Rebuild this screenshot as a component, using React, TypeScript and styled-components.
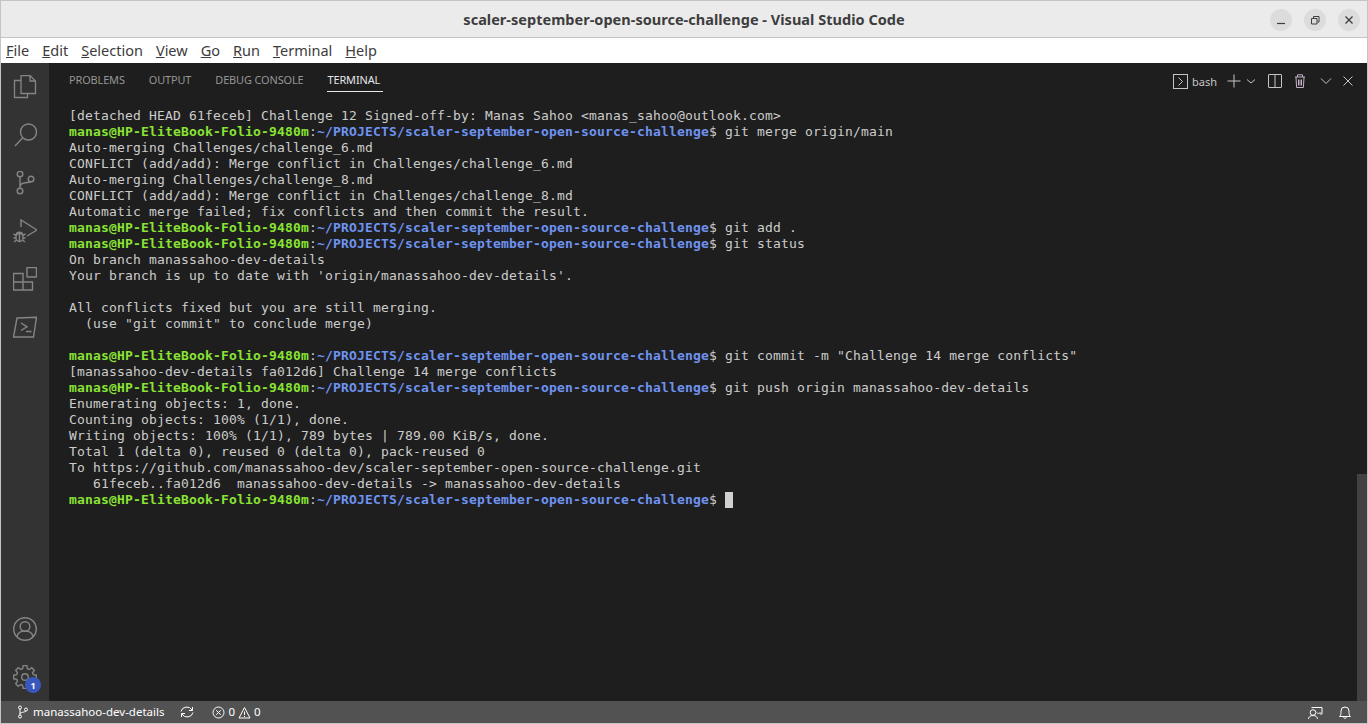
import React from "react";
import styled, { createGlobalStyle } from "styled-components";

const Global = createGlobalStyle`
  html, body { margin: 0; padding: 0; width: 1368px; height: 724px; overflow: hidden; background: #c8c8c8; }
  * { box-sizing: border-box; }
`;
const UI = `"Noto Sans", "Open Sans", sans-serif`;

const Win = styled.div`
  width: 1368px; height: 724px; display: flex; flex-direction: column;
  border: 1px solid #c4c4c4; background: #1e1e1e;
  font-family: ${UI};
`;
const TitleBar = styled.header`
  height: 37px; flex: none; background: #ebebeb; display: flex; align-items: center; justify-content: flex-end;
  position: relative; padding-right: 7px; gap: 12px; border-bottom: 1px solid #c4c4c4;
`;
const Title = styled.h1`
  position: absolute; left: 0; right: 0; top: 0; margin: 0; text-align: center; line-height: 36px;
  font-size: 14.5px; font-weight: 700; color: #3d3d3d; letter-spacing: 0.02px;
`;
const WinBtn = styled.button`
  width: 22px; height: 22px; border-radius: 50%; border: 0; background: #dcdcdc; padding: 0;
  display: flex; align-items: center; justify-content: center; color: #3d3d3d; margin-top: 2px;
`;
const MenuBar = styled.nav`
  height: 25px; flex: none; background: #fff; display: flex; align-items: center; padding-left: 5px; gap: 13px;
  font-size: 14.5px; color: #3c3c3c;
`;
const MenuItem = styled.span`
  line-height: 25px;
  &::first-letter { text-decoration: underline; }
`;
const Main = styled.div`flex: 1; min-height: 0; display: flex;`;
const Activity = styled.aside`
  width: 48px; flex: none; background: #333; display: flex; flex-direction: column; justify-content: space-between;
`;
const ActGroup = styled.div`display: flex; flex-direction: column;`;
const ActItem = styled.div`
  width: 48px; height: 48px; display: flex; align-items: center; justify-content: center; color: #858585; position: relative;
`;
const Badge = styled.span`
  position: absolute; left: 24px; top: 24px; width: 16px; height: 16px; border-radius: 50%; background: #3a57bd;
  color: #fff; font-size: 9px; font-weight: 700; display: flex; align-items: center; justify-content: center;
`;
const Panel = styled.main`flex: 1; min-width: 0; display: flex; flex-direction: column; position: relative;`;
const PanelHead = styled.div`
  height: 35px; flex: none; display: flex; align-items: flex-start; justify-content: space-between; padding-left: 20px; padding-right: 12px;
`;
const Tabs = styled.div`display: flex; gap: 24px;`;
const Tab = styled.div<{ $active?: boolean }>`
  height: 28px; line-height: 34px; font-size: 10.9px; letter-spacing: -0.1px;
  padding: ${p => (p.$active ? "0 3px 0 1px" : "0")};
  margin: ${p => (p.$active ? "0 0 0 -1px" : "0")};
  color: ${p => (p.$active ? "#e7e7e7" : "#969696")};
  box-shadow: ${p => (p.$active ? "0 1px 0 #e7e7e7" : "none")};
`;
const Actions = styled.div`display: flex; align-items: center; height: 36px; color: #c5c5c5; font-size: 11px;`;
const ActionIcon = styled.span<{ $w: number }>`
  width: ${p => p.$w}px; display: flex; align-items: center; justify-content: center; height: 20px;
`;
const Shell = styled.span`margin: 0 10px 0 4px;`;
const Term = styled.pre`
  margin: 0; padding: 10px 0 0 20px; flex: 1; font-family: "DejaVu Sans Mono", monospace; font-size: 13px;
  letter-spacing: 0.174px; line-height: 16px; color: #cccccc;
`;
const Line = styled.div`height: 16px; white-space: pre;`;
const User = styled.span`color: #8ae234; font-weight: 700;`;
const Path = styled.span`color: #6f93f0; font-weight: 700;`;
const Cursor = styled.span`
  display: inline-block; width: 8px; height: 16px; background: #d0d0d0; vertical-align: top; margin-left: 8px;
`;
const Thumb = styled.div`
  position: absolute; right: 0; bottom: 0; width: 10px; height: 227px; background: #424242;
`;
const Status = styled.footer`
  height: 22px; flex: none; background: #525252; color: #fff; display: flex; align-items: center; justify-content: space-between;
  font-size: 11.5px; padding: 0 15px; line-height: 22px;
`;
const StatusSide = styled.div`display: flex; align-items: center;`;
const StatusText = styled.span<{ $l?: number }>`margin-left: ${p => p.$l ?? 0}px;`;
const StatusIcon = styled.span<{ $l?: number }>`display: flex; margin-left: ${p => p.$l ?? 0}px;`;

const Ico: React.FC<{ s?: number; w?: number; children: React.ReactNode }> = ({ s = 24, w = 1.2, children }) => (
  <svg width={s} height={s} viewBox={`0 0 ${s} ${s}`} fill="none" stroke="currentColor" strokeWidth={w}>{children}</svg>
);

const gearPath = (() => {
  const pts: string[] = [];
  const teeth = 8, c = 12, ro = 11.5, ri = 8.6;
  for (let i = 0; i < teeth; i++) {
    const a = (i / teeth) * Math.PI * 2 - Math.PI / 2;
    const step = (Math.PI * 2) / teeth;
    const p = (r: number, d: number) => `${(c + r * Math.cos(a + d * step)).toFixed(2)} ${(c + r * Math.sin(a + d * step)).toFixed(2)}`;
    pts.push(p(ri, -0.36), p(ro, -0.2), p(ro, 0.2), p(ri, 0.36));
  }
  return "M" + pts.join("L") + "Z";
})();

const Prompt = () => (<><User>manas@HP-EliteBook-Folio-9480m</User>:<Path>~/PROJECTS/scaler-september-open-source-challenge</Path>$</>);

const lines: (string | { cmd: string })[] = [
  "[detached HEAD 61feceb] Challenge 12 Signed-off-by: Manas Sahoo <manas_sahoo@outlook.com>",
  { cmd: " git merge origin/main" },
  "Auto-merging Challenges/challenge_6.md",
  "CONFLICT (add/add): Merge conflict in Challenges/challenge_6.md",
  "Auto-merging Challenges/challenge_8.md",
  "CONFLICT (add/add): Merge conflict in Challenges/challenge_8.md",
  "Automatic merge failed; fix conflicts and then commit the result.",
  { cmd: " git add ." },
  { cmd: " git status" },
  "On branch manassahoo-dev-details",
  "Your branch is up to date with 'origin/manassahoo-dev-details'.",
  "",
  "All conflicts fixed but you are still merging.",
  "  (use \"git commit\" to conclude merge)",
  "",
  { cmd: " git commit -m \"Challenge 14 merge conflicts\"" },
  "[manassahoo-dev-details fa012d6] Challenge 14 merge conflicts",
  { cmd: " git push origin manassahoo-dev-details" },
  "Enumerating objects: 1, done.",
  "Counting objects: 100% (1/1), done.",
  "Writing objects: 100% (1/1), 789 bytes | 789.00 KiB/s, done.",
  "Total 1 (delta 0), reused 0 (delta 0), pack-reused 0",
  "To https://github.com/manassahoo-dev/scaler-september-open-source-challenge.git",
  "   61feceb..fa012d6  manassahoo-dev-details -> manassahoo-dev-details",
];

export default function App() {
  return (
    <>
      <Global />
      <Win>
        <TitleBar>
          <Title>scaler-september-open-source-challenge - Visual Studio Code</Title>
          <WinBtn><svg width="10" height="10" viewBox="0 0 10 10" stroke="currentColor" strokeWidth="1.2"><path d="M1 8.5h8" /></svg></WinBtn>
          <WinBtn><svg width="10" height="10" viewBox="0 0 10 10" fill="none" stroke="currentColor" strokeWidth="1"><path d="M1.5 3.5h5.5v5.5h-5.5zM3.5 3V1.5h5.5v5.5H7.5" /></svg></WinBtn>
          <WinBtn><svg width="10" height="10" viewBox="0 0 10 10" stroke="currentColor" strokeWidth="1.3"><path d="M1.5 1.5l7 7M8.5 1.5l-7 7" /></svg></WinBtn>
        </TitleBar>
        <MenuBar>
          {["File", "Edit", "Selection", "View", "Go", "Run", "Terminal", "Help"].map(m => <MenuItem key={m}>{m}</MenuItem>)}
        </MenuBar>
        <Main>
          <Activity>
            <ActGroup>
              <ActItem><Ico w={1.3}><path d="M8 18.5V.5h9l5.500 5.500v12.500zM17 .5v5.500h5.500" /><path d="M8 5.500H1.500v17h13v-4" /></Ico></ActItem>
              <ActItem><Ico w={1.4}><circle cx="15.500" cy="9" r="8" /><path d="M9.800 14.700L2 23" /></Ico></ActItem>
              <ActItem><Ico w={1.4}><circle cx="7" cy="3" r="2.800" /><circle cx="7" cy="20" r="2.800" /><circle cx="18" cy="8" r="2.800" /><path d="M7 5.800v11.400M7 15.500c.5-3 3-3.500 5.500-3.700 2.500-.2 4.500-.8 5.500-1" /></Ico></ActItem>
              <ActItem><Ico w={1.4}><path d="M8 8V1l16 10-10 6" /><ellipse cx="6.500" cy="18.500" rx="3.600" ry="4" /><path d="M3.500 15.500c0-3 6-3 6 0M.5 15l3 1.500M.5 19h2.500M1 23l2.500-2M12.500 15l-3 1.500M12.500 19H10M12 23l-2.500-2M6.500 15v7" /></Ico></ActItem>
              <ActItem><Ico w={1.4}><path d="M.5 6.500H10V23H.5zM.5 15H19.500V23H10" /><rect x="14" y=".5" width="9.500" height="9.500" rx=".5" /></Ico></ActItem>
              <ActItem><Ico w={1.4}><path d="M4 3l19.500-.8L20.500 22H.5zM8 8l6 3.800L8 15.500M13 16.500h5.500" /></Ico></ActItem>
            </ActGroup>
            <ActGroup>
              <ActItem><Ico w={1.4}><circle cx="12" cy="12" r="11.300" /><circle cx="12" cy="9.500" r="4.800" /><path d="M4 20c.5-4 3.800-6 8-6s7.500 2 8 6" /></Ico></ActItem>
              <ActItem>
                <Ico w={1.4}><path d={gearPath} /><circle cx="12" cy="12" r="3.300" /></Ico>
                <Badge>1</Badge>
              </ActItem>
            </ActGroup>
          </Activity>
          <Panel>
            <PanelHead>
              <Tabs>
                <Tab>PROBLEMS</Tab><Tab>OUTPUT</Tab><Tab>DEBUG CONSOLE</Tab><Tab $active>TERMINAL</Tab>
              </Tabs>
              <Actions>
                <ActionIcon $w={15}><Ico s={15} w={1}><rect x=".5" y=".5" width="14" height="14" /><path d="M5.500 3.500l4 4-4 4" /></Ico></ActionIcon>
                <Shell>bash</Shell>
                <ActionIcon $w={14}><Ico s={14} w={1}><path d="M7 .5v13M.5 7h13" /></Ico></ActionIcon>
                <ActionIcon $w={20}><Ico s={10} w={1}><path d="M1 3.500L5 7l4-3.500" /></Ico></ActionIcon>
                <ActionIcon $w={28}><Ico s={14} w={1}><rect x=".5" y=".5" width="13" height="13" rx=".5" /><path d="M7 .5v13" /></Ico></ActionIcon>
                <ActionIcon $w={22}><Ico s={14} w={1}><path d="M2 3h10M4.500 3V.8h5V3M3 3l.6 10.500h6.800L11 3M5.500 5.500v6M7 5.500v6M8.500 5.500v6" stroke="#c4b0c8" /></Ico></ActionIcon>
                <ActionIcon $w={30}><Ico s={12} w={1}><path d="M1 3.500L6 8.500l5-5" /></Ico></ActionIcon>
                <ActionIcon $w={14}><Ico s={12} w={1}><path d="M1.500 1.500l9 9M10.500 1.500l-9 9" /></Ico></ActionIcon>
              </Actions>
            </PanelHead>
            <Term>
              {lines.map((l, i) => (
                <Line key={i}>{typeof l === "string" ? l : <><Prompt />{l.cmd}</>}</Line>
              ))}
              <Line><Prompt /><Cursor /></Line>
            </Term>
            <Thumb />
          </Panel>
        </Main>
        <Status>
          <StatusSide>
            <StatusIcon><Ico s={14} w={1}><circle cx="4" cy="2.500" r="1.500" /><circle cx="4" cy="11.500" r="1.500" /><circle cx="10" cy="4.500" r="1.500" /><path d="M4 4v6M4 9c0-2 5-1.500 6-3" /></Ico></StatusIcon>
            <StatusText $l={3}>manassahoo-dev-details</StatusText>
            <StatusIcon $l={16}><Ico s={14} w={1}><path d="M1 6.500A6 6 0 0 1 12 5M13 7.500A6 6 0 0 1 2 9" /><path d="M12.500 2v3.500H9M1.500 12V8.500H5" /></Ico></StatusIcon>
            <StatusIcon $l={18}><Ico s={13} w={1}><circle cx="6.500" cy="6.500" r="5.500" /><path d="M4.200 4.200l4.600 4.600M8.800 4.200l-4.600 4.600" /></Ico></StatusIcon>
            <StatusText $l={3}>0</StatusText>
            <StatusIcon $l={3}><Ico s={13} w={1}><path d="M6.500 1.500l5.500 10.500H1zM6.500 5.500v3.500M6.500 10v1" /></Ico></StatusIcon>
            <StatusText $l={3}>0</StatusText>
          </StatusSide>
          <StatusSide>
            <StatusIcon><Ico s={15} w={1}><circle cx="5" cy="7.500" r="2.800" /><path d="M.5 14c.3-2.500 2-3.500 4.500-3.500s4.200 1 4.500 3.500M3.500 2.500h10.500v6.500h-2M9 7.500l1.500 1.500 2-2" /></Ico></StatusIcon>
            <StatusIcon $l={15}><Ico s={14} w={1}><path d="M1.500 11.500c1.200-.8 1.500-2 1.500-4V6a4 4 0 0 1 8 0v1.500c0 2 .3 3.200 1.500 4zM5.500 12.500c.3 1 2.700 1 3 0" /></Ico></StatusIcon>
          </StatusSide>
        </Status>
      </Win>
    </>
  );
}
